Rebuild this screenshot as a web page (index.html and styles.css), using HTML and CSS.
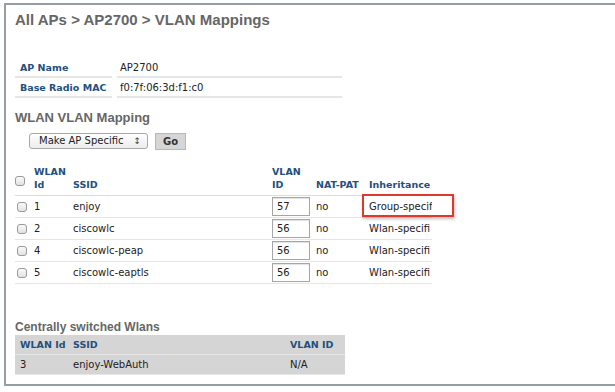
FILE: index.html
```html
<!DOCTYPE html>
<html lang="en">
<head>
    <meta charset="UTF-8">
    <title>VLAN Mappings</title>
    <link rel="stylesheet" href="styles.css">
</head>
<body>
    <div class="frame">
        <h2 class="crumbs">All APs &gt; AP2700 &gt; VLAN Mappings</h2>

        <table class="info">
            <tr><td class="label">AP Name</td><td class="value">AP2700</td></tr>
            <tr><td class="label">Base Radio MAC</td><td class="value">f0:7f:06:3d:f1:c0</td></tr>
        </table>

        <h3 class="section">WLAN VLAN Mapping</h3>

        <div class="actions">
            <div class="select">Make AP Specific <span class="arrows">&#8597;</span></div>
            <button class="go">Go</button>
        </div>

        <table class="map">
            <tr class="head">
                <th class="c-check"><span class="box"></span></th>
                <th class="c-id">WLAN<br>Id</th>
                <th class="c-ssid">SSID</th>
                <th class="c-vlan">VLAN<br>ID</th>
                <th class="c-nat">NAT-PAT</th>
                <th class="c-inh">Inheritance</th>
            </tr>
            <tr>
                <td><span class="box"></span></td>
                <td>1</td>
                <td>enjoy</td>
                <td><div class="field">57</div></td>
                <td>no</td>
                <td class="marked"><div class="inh">Group-specif</div></td>
            </tr>
            <tr>
                <td><span class="box"></span></td>
                <td>2</td>
                <td>ciscowlc</td>
                <td><div class="field">56</div></td>
                <td>no</td>
                <td><div class="inh">Wlan-specifi</div></td>
            </tr>
            <tr>
                <td><span class="box"></span></td>
                <td>4</td>
                <td>ciscowlc-peap</td>
                <td><div class="field">56</div></td>
                <td>no</td>
                <td><div class="inh">Wlan-specifi</div></td>
            </tr>
            <tr>
                <td><span class="box"></span></td>
                <td>5</td>
                <td>ciscowlc-eaptls</td>
                <td><div class="field">56</div></td>
                <td>no</td>
                <td><div class="inh">Wlan-specifi</div></td>
            </tr>
        </table>

        <h3 class="section central">Centrally switched Wlans</h3>

        <table class="grey">
            <tr>
                <th class="g-id">WLAN Id</th>
                <th class="g-ssid">SSID</th>
                <th>VLAN ID</th>
            </tr>
            <tr>
                <td>3</td>
                <td>enjoy-WebAuth</td>
                <td>N/A</td>
            </tr>
        </table>
    </div>
</body>
</html>
```
FILE: styles.css
```css
body {
    margin: 0;
    background: #fff;
    font-family: "DejaVu Sans", Verdana, sans-serif;
    font-size: 10px;
    color: #222;
}
.frame {
    width: 601px;
    height: 379px;
    margin: 3px 0 0 4px;
    border: 2px solid #959da6;
    padding: 0 0 0 9px;
    box-sizing: content-box;
    background: #fff;
}
.crumbs {
    margin: 0;
    padding-top: 6px;
    font-family: "Liberation Sans", Arial, sans-serif;
    font-size: 15px;
    font-weight: bold;
    color: #666;
}
.info {
    margin-top: 30px;
    border-collapse: separate;
    border-spacing: 5px 0;
    margin-left: -5px;
}
.info td {
    height: 18px;
    padding: 0 0 0 5px;
    border-bottom: 2px solid #e6e6e6;
}
.info .label {
    width: 92px;
    font-weight: bold;
    font-size: 9.5px;
    color: #23507d;
}
.info .value {
    width: 222px;
    padding-left: 3px;
}
.section {
    margin: 12px 0 0;
    font-family: "Liberation Sans", Arial, sans-serif;
    font-size: 13px;
    font-weight: bold;
    color: #666;
}
.actions {
    display: flex;
    gap: 7px;
    margin: 8px 0 0 14px;
}
.select {
    width: 108px;
    height: 14px;
    padding-left: 9px;
    border: 1px solid #a8a8a8;
    border-radius: 3px;
    background: linear-gradient(#fff, #ececec);
    font-size: 10px;
    line-height: 14px;
    display: flex;
    justify-content: space-between;
}
.arrows {
    font-size: 9px;
    padding-right: 6px;
    color: #444;
}
.go {
    width: 31px;
    height: 17px;
    padding: 0;
    border: 1px solid #b8b8b8;
    background: #d6d6d6;
    font-family: "DejaVu Sans", sans-serif;
    font-size: 10px;
    font-weight: bold;
    color: #333;
}
.map {
    margin-top: 15px;
    border-collapse: collapse;
}
.map th {
    font-size: 9.5px;
    font-weight: bold;
    color: #23507d;
    text-align: left;
    vertical-align: bottom;
    padding: 0 0 4px;
    line-height: 13px;
    border-bottom: 1px solid #dcdcdc;
}
.map td {
    height: 21px;
    padding: 0;
    border-bottom: 1px solid #e6e6e6;
}
.map th.c-check { vertical-align: middle; padding-bottom: 0; }
.c-check { width: 19px; }
.c-id { width: 39px; }
.c-ssid { width: 199px; }
.c-vlan { width: 44px; }
.c-nat { width: 53px; }
.c-inh { width: 63px; }
.map td:first-child { padding-left: 2px; }
.box {
    display: inline-block;
    width: 8px;
    height: 8px;
    border: 1px solid #9a9a9a;
    border-radius: 3px;
    background: linear-gradient(#fafafa, #e2e2e2);
    vertical-align: middle;
}
.field {
    width: 32px;
    height: 17px;
    padding-left: 4px;
    border: 1px solid #a6a6a6;
    box-shadow: inset 0 1px 1px rgba(0, 0, 0, 0.12);
    line-height: 17px;
}
.inh {
    width: 63px;
    overflow: hidden;
    white-space: nowrap;
}
.marked {
    position: relative;
}
.marked::before {
    content: "";
    position: absolute;
    left: -7px;
    top: -2px;
    width: 88px;
    height: 19px;
    border: 2px solid #de3a2b;
    box-shadow: 1px 2px 3px rgba(0, 0, 0, 0.25);
}
.central {
    margin-top: 36px;
    font-size: 12px;
}
.grey {
    margin-top: 1px;
    width: 330px;
    border-collapse: collapse;
    background: #d5d5d5;
}
.grey th,
.grey td {
    height: 19px;
    padding: 0 0 0 5px;
    text-align: left;
    border-bottom: 1px solid #e6e6e6;
}
.grey th {
    font-size: 9.5px;
    color: #23507d;
}
.g-id { width: 48px; }
.g-ssid { width: 212px; }
```
